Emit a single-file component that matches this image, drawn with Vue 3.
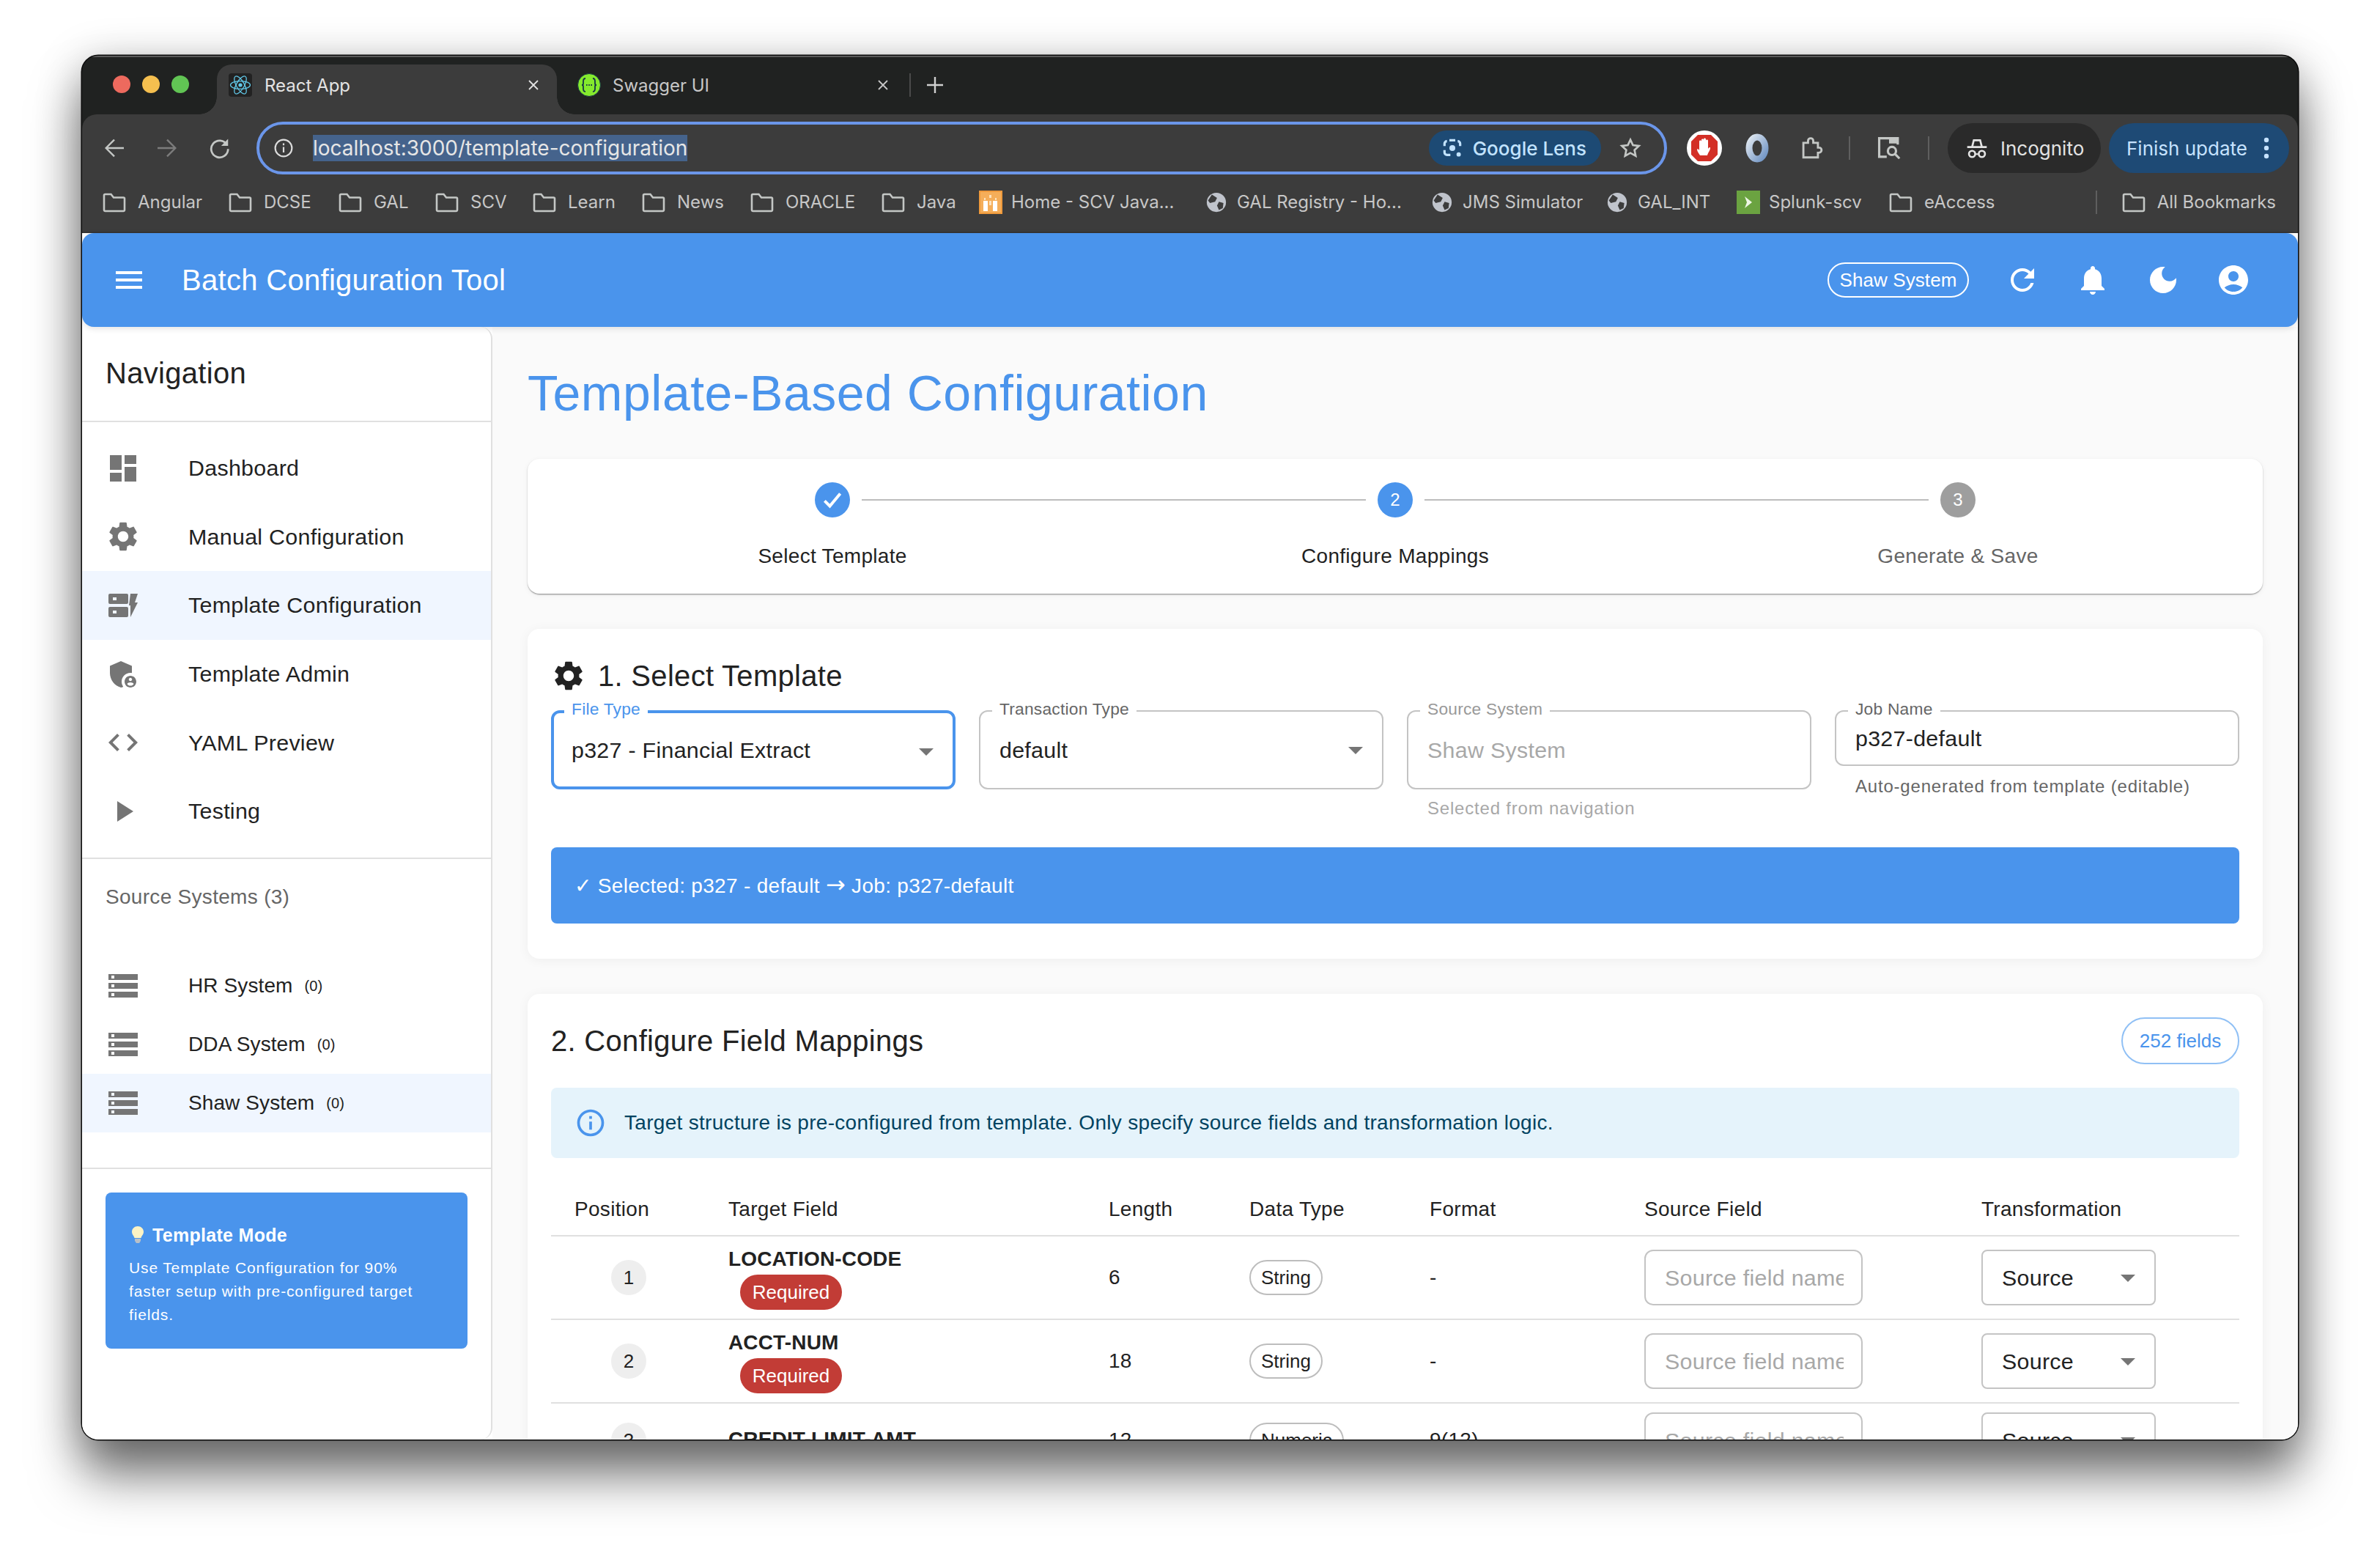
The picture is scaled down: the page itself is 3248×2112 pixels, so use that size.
<template>
  <div class="stage">
    <div class="window">
      <!-- tab strip -->
      <div class="tabstrip">
        <div class="lights">
          <span class="light red"></span>
          <span class="light yellow"></span>
          <span class="light green"></span>
        </div>
        <div class="tab active">
          <span class="favicon react">
            <svg viewBox="0 0 32 32" width="32" height="32" fill="none" stroke="#61c8e8" stroke-width="1.3">
              <ellipse cx="16" cy="16" rx="13.5" ry="5.4" />
              <ellipse cx="16" cy="16" rx="13.5" ry="5.4" transform="rotate(60 16 16)" />
              <ellipse cx="16" cy="16" rx="13.5" ry="5.4" transform="rotate(120 16 16)" />
              <circle cx="16" cy="16" r="2.6" fill="#61c8e8" stroke="none" />
            </svg>
          </span>
          <span class="tab-title">React App</span>
          <svg class="tab-x" viewBox="0 0 16 16" width="16" height="16" stroke="#e3e3e3" stroke-width="1.8"><path d="M2 2l12 12M14 2L2 14" /></svg>
        </div>
        <div class="tab">
          <svg class="swagger" viewBox="0 0 32 32" width="32" height="32">
            <circle cx="16" cy="16" r="15.5" fill="#85ea2d" />
            <circle cx="16" cy="16" r="15.5" fill="none" stroke="#173647" stroke-width="1" />
            <path d="M11 7c-3 0-3 2-3 4v3c0 1-1 2-2 2 1 0 2 1 2 2v3c0 2 0 4 3 4M21 7c3 0 3 2 3 4v3c0 1 1 2 2 2-1 0-2 1-2 2v3c0 2 0 4-3 4" fill="none" stroke="#173647" stroke-width="1.8" />
            <path d="M12 16h1.6M15.2 16h1.6M18.4 16H20" stroke="#173647" stroke-width="2" />
          </svg>
          <span class="tab-title dim">Swagger UI</span>
          <svg class="tab-x" viewBox="0 0 16 16" width="16" height="16" stroke="#c7c7c7" stroke-width="1.8"><path d="M2 2l12 12M14 2L2 14" /></svg>
        </div>
        <span class="tab-sep"></span>
        <svg class="tab-plus" viewBox="0 0 24 24" width="24" height="24" stroke="#d0d0d0" stroke-width="2.4"><path d="M12 1v22M1 12h22" /></svg>
      </div>

      <!-- browser toolbar -->
      <div class="toolbar">
        <div class="navrow">
          <button class="navbtn">
            <svg viewBox="0 0 24 24" width="26" height="26" fill="none" stroke="#c4c7c5" stroke-width="2.2"><path d="M24 12H2M12 1.5L1.5 12 12 22.5" /></svg>
          </button>
          <button class="navbtn">
            <svg viewBox="0 0 24 24" width="26" height="26" fill="none" stroke="#7c7c7c" stroke-width="2.2"><path d="M0 12h22M12 1.5L22.500 12 12 22.500" /></svg>
          </button>
          <button class="navbtn">
            <svg viewBox="0 0 24 24" width="30" height="30" fill="none" stroke="#c4c7c5" stroke-width="2.2"><path d="M19.800 8.500A9.200 9.200 0 1 0 21 13" /><path d="M21 2v7.500h-7.500" fill="#c4c7c5" stroke="none" /></svg>
          </button>
          <div class="omnibox">
            <svg class="info-i" viewBox="0 0 24 24" width="26" height="26" fill="none" stroke="#dcdcdc" stroke-width="2"><circle cx="12" cy="12" r="10.500" /><path d="M12 10.500v7M12 6v2.500" /></svg>
            <span class="url">localhost:3000/template-configuration</span>
            <span class="spacer"></span>
            <span class="lens">
              <svg viewBox="0 0 24 24" width="32" height="32" fill="none" stroke="#c2e3ff" stroke-width="2.400">
                <path d="M9 4h6M4 10V7.500A2.500 2.500 0 0 1 6.500 5M20 10V7.500A2.500 2.500 0 0 0 17.500 5M4 14v2.500A2.500 2.500 0 0 0 6.500 19H10" />
                <circle cx="12" cy="12" r="3" fill="#c2e3ff" stroke="none" />
                <circle cx="18.500" cy="18.500" r="2.200" fill="#c2e3ff" stroke="none" />
              </svg>
              Google Lens
            </span>
            <svg class="star" viewBox="0 0 24 24" width="32" height="32" fill="none" stroke="#c4c7c5" stroke-width="2"><path d="M12 3.500l2.600 5.600 6.100.7-4.500 4.200 1.200 6L12 17l-5.400 3 1.200-6-4.500-4.200 6.100-.7z" /></svg>
          </div>
          <span class="ext adblock">
            <svg viewBox="0 0 48 48" width="48" height="48">
              <circle cx="24" cy="24" r="24" fill="#fff" />
              <path d="M15 6h18l9 9v18l-9 9H15l-9-9V15z" fill="#d32f26" />
              <path d="M18 34c-2-3-4-6-4-8 0-1 2-1 3 1V15c0-2 3-2 3 0v-2c0-2 3-2 3 0v-1c0-2 3-2 3 0v2c0-2 3-2 3 0v11c1-2 3-3 3-1 0 3-3 6-4 10z" fill="#fff" />
            </svg>
          </span>
          <span class="ext ring">
            <svg viewBox="0 0 40 48" width="40" height="48">
              <defs>
                <linearGradient id="ringGrad" x1="0" y1="0" x2="1" y2="1">
                  <stop offset="0" stop-color="#dfe7f0" />
                  <stop offset="1" stop-color="#6f93c4" />
                </linearGradient>
              </defs>
              <ellipse cx="20" cy="24" rx="11" ry="15" fill="none" stroke="url(#ringGrad)" stroke-width="9" />
            </svg>
          </span>
          <span class="ext puzzle">
            <svg viewBox="0 0 24 24" width="34" height="34" fill="none" stroke="#c4c7c5" stroke-width="2"><path d="M5 7h4.500V5a2.500 2.500 0 0 1 5 0v2H19v4.500h1a2.500 2.500 0 0 1 0 5h-1V21H5z" /></svg>
          </span>
          <span class="vsep first"></span>
          <span class="ext tabsearch">
            <svg viewBox="0 0 24 24" width="38" height="38" fill="none" stroke="#c4c7c5" stroke-width="2"><path d="M10 19.500H3.500v-16h16V9" /><path d="M12 3.500h7.500V8H12z" fill="#c4c7c5" stroke="none" /><circle cx="14.500" cy="14.500" r="3.500" /><path d="M17 17l4 4" /></svg>
          </span>
          <span class="vsep second"></span>
          <div class="pill incognito">
            <svg viewBox="0 0 24 24" width="32" height="32" fill="#e3e3e3"><path d="M8 3h8l1.800 7H22v2H2v-2h4.200zM9.500 5L8.300 10h7.400l-1.200-5z" /><circle cx="7" cy="18" r="3.200" fill="none" stroke="#e3e3e3" stroke-width="2" /><circle cx="17" cy="18" r="3.200" fill="none" stroke="#e3e3e3" stroke-width="2" /><path d="M10 17.500h4v1.500h-4z" /></svg>
            <span>Incognito</span>
          </div>
          <div class="pill finish">
            <span>Finish update</span>
            <svg viewBox="0 0 8 32" width="8" height="32" fill="#c6e2ff"><circle cx="4" cy="5" r="3.200" /><circle cx="4" cy="16" r="3.200" /><circle cx="4" cy="27" r="3.200" /></svg>
          </div>
        </div>

        <div class="bookmarks">
          <div
            v-for="b in bookmarks"
            :key="b.name"
            class="bookmark"
            :class="[b.icon, { end: b.end }]"
            :style="b.w ? { width: b.w + 'px' } : null"
          >
            <svg v-if="b.icon === 'folder'" viewBox="0 0 32 32" width="32" height="32" fill="none" stroke="#c4c7c5" stroke-width="2.600"><path d="M2 6.500A1.500 1.500 0 0 1 3.500 5h8L15 9.500h13.500A1.500 1.500 0 0 1 30 11v15.500a1.500 1.500 0 0 1-1.500 1.500h-25A1.500 1.500 0 0 1 2 26.500z" /></svg>
            <svg v-else-if="b.icon === 'globe'" viewBox="0 0 32 32" width="28" height="28">
              <circle cx="16" cy="16" r="15" fill="#c0c4cc" />
              <path d="M9 4l8 5-3 6-8 2-3-4zM20 15l7 2-1 8-6 3-3-7z" fill="#3c3c3c" />
            </svg>
            <svg v-else-if="b.icon === 'home'" viewBox="0 0 32 32" width="32" height="32">
              <rect width="32" height="32" fill="#ef9a3c" />
              <rect x="2" y="2" width="28" height="28" fill="#f5ae5a" />
              <path d="M6 14h6v14H6zM19 14h6v14h-6z" fill="#fff" />
              <path d="M14 6h3v4h-3zM7 10h2v3H7zM22 10h2v3h-2zM14 14h3v6h-3z" fill="#fde2bd" />
            </svg>
            <svg v-else viewBox="0 0 32 32" width="32" height="32">
              <rect width="32" height="32" fill="#6ba341" />
              <path d="M11 8l10 8-10 8 3-8z" fill="#eef6e6" />
            </svg>
            <span>{{ b.name }}</span>
          </div>
        </div>
      </div>

      <!-- page -->
      <div class="page">
        <header class="appbar">
          <svg class="hamburger" viewBox="0 0 24 24" width="48" height="48" fill="#fff"><path d="M3 18h18v-2H3v2zm0-5h18v-2H3v2zm0-7v2h18V6H3z" /></svg>
          <h1 class="app-title">Batch Configuration Tool</h1>
          <span class="spacer"></span>
          <span class="system-chip">Shaw System</span>
          <svg class="bar-icon first-icon" viewBox="0 0 24 24" width="48" height="48" fill="#fff"><path d="M17.650 6.350C16.200 4.900 14.210 4 12 4c-4.420 0-7.990 3.580-7.990 8s3.570 8 7.990 8c3.730 0 6.840-2.550 7.730-6h-2.080c-.82 2.330-3.040 4-5.650 4-3.310 0-6-2.690-6-6s2.690-6 6-6c1.660 0 3.140.69 4.220 1.780L13 11h7V4l-2.350 2.350z" /></svg>
          <svg class="bar-icon" viewBox="0 0 24 24" width="48" height="48" fill="#fff"><path d="M12 22c1.100 0 2-.9 2-2h-4c0 1.100.89 2 2 2zm6-6v-5c0-3.070-1.640-5.640-4.500-6.320V4c0-.83-.67-1.500-1.500-1.500s-1.500.67-1.500 1.500v.68C7.630 5.360 6 7.920 6 11v5l-2 2v1h16v-1l-2-2z" /></svg>
          <svg class="bar-icon" viewBox="0 0 24 24" width="48" height="48" fill="#fff"><path d="M12 3c-4.970 0-9 4.030-9 9s4.030 9 9 9 9-4.030 9-9c0-.46-.04-.92-.1-1.360-.98 1.370-2.580 2.260-4.400 2.260-2.980 0-5.400-2.420-5.400-5.400 0-1.810.89-3.420 2.260-4.400-.44-.06-.9-.1-1.360-.1z" /></svg>
          <svg class="bar-icon" viewBox="0 0 24 24" width="48" height="48" fill="#fff"><path d="M12 2C6.480 2 2 6.480 2 12s4.480 10 10 10 10-4.480 10-10S17.520 2 12 2zm0 4c1.930 0 3.500 1.570 3.500 3.500S13.930 13 12 13s-3.500-1.570-3.500-3.500S10.070 6 12 6zm0 14c-2.030 0-4.430-.82-6.140-2.880C7.550 15.800 9.680 15 12 15s4.450.8 6.140 2.120C16.430 19.180 14.030 20 12 20z" /></svg>
        </header>

        <div class="body">
          <aside class="sidebar">
            <div class="side-head">Navigation</div>
            <ul class="nav">
              <li v-for="item in navItems" :key="item.label" class="nav-item" :class="{ selected: item.selected }">
                <svg viewBox="0 0 24 24" width="48" height="48" fill="#757575"><path v-for="d in item.paths" :key="d" :d="d" /></svg>
                <span>{{ item.label }}</span>
              </li>
            </ul>
            <div class="side-sub">Source Systems (3)</div>
            <ul class="systems">
              <li v-for="s in systems" :key="s.label" class="system-item" :class="{ selected: s.selected }">
                <svg viewBox="0 0 24 24" width="48" height="48" fill="#757575"><path d="M2 20h20v-4H2v4zm2-3h2v2H4v-2zM2 4v4h20V4H2zm4 3H4V5h2v2zm-4 7h20v-4H2v4zm2-3h2v2H4v-2z" /></svg>
                <span>{{ s.label }}</span>
                <small>(0)</small>
              </li>
            </ul>
            <div class="side-foot">
              <div class="mode-card">
                <div class="mode-title">
                  <svg viewBox="0 0 16 24" width="16" height="24">
                    <path d="M8 0c4.400 0 8 3.300 8 7.500 0 3.600-2.600 5.300-3.500 8.500h-9C2.600 12.800 0 11.100 0 7.500 0 3.300 3.600 0 8 0z" fill="#fdf3c4" />
                    <path d="M4 17h8v3l-2 3H6l-2-3z" fill="#b9c0c8" />
                  </svg>
                  Template Mode
                </div>
                <p>Use Template Configuration for 90% faster setup with pre-configured target fields.</p>
              </div>
            </div>
          </aside>

          <main class="main">
            <h2 class="page-title">Template-Based Configuration</h2>

            <section class="card stepper">
              <div v-for="(step, i) in steps" :key="step.label" class="step" :class="step.state">
                <span v-if="i > 0" class="connector"></span>
                <span class="step-dot">
                  <svg v-if="step.state === 'done'" viewBox="0 0 24 24" width="34" height="34" fill="none" stroke="#fff" stroke-width="2.800"><path d="M4.500 13l5 5 10-12" /></svg>
                  <template v-else>{{ i + 1 }}</template>
                </span>
                <span class="step-label">{{ step.label }}</span>
              </div>
            </section>

            <section class="card select-card">
              <h3 class="card-title">
                <svg viewBox="0 0 24 24" width="48" height="48" fill="#222"><path :d="gearPath" /></svg>
                1. Select Template
              </h3>
              <div class="field-grid">
                <div class="field">
                  <div class="outline focused">
                    <span class="float-label">File Type</span>
                    <span class="value">p327 - Financial Extract</span>
                    <svg class="caret" viewBox="0 0 24 24" width="48" height="48" fill="#757575"><path d="M7 10l5 5 5-5z" /></svg>
                  </div>
                </div>
                <div class="field">
                  <div class="outline">
                    <span class="float-label">Transaction Type</span>
                    <span class="value">default</span>
                    <svg class="caret" viewBox="0 0 24 24" width="48" height="48" fill="#757575"><path d="M7 10l5 5 5-5z" /></svg>
                  </div>
                </div>
                <div class="field">
                  <div class="outline disabled">
                    <span class="float-label">Source System</span>
                    <span class="value">Shaw System</span>
                  </div>
                  <p class="helper muted">Selected from navigation</p>
                </div>
                <div class="field">
                  <div class="outline short">
                    <span class="float-label">Job Name</span>
                    <span class="value">p327-default</span>
                  </div>
                  <p class="helper job">Auto-generated from template (editable)</p>
                </div>
              </div>
              <div class="selected-bar"><span>✓ Selected: p327 - default <span class="arrow">→</span> Job: p327-default</span></div>
            </section>

            <section class="card mapping-card">
              <div class="mapping-head">
                <h3 class="card-title plain">2. Configure Field Mappings</h3>
                <span class="count-chip">252 fields</span>
              </div>
              <div class="alert">
                <svg viewBox="0 0 24 24" width="44" height="44" fill="#4a94ec"><path d="M11 7h2v2h-2zm0 4h2v6h-2zm1-9C6.480 2 2 6.480 2 12s4.480 10 10 10 10-4.480 10-10S17.520 2 12 2zm0 18c-4.410 0-8-3.590-8-8s3.590-8 8-8 8 3.590 8 8-3.590 8-8 8z" /></svg>
                <span>Target structure is pre-configured from template. Only specify source fields and transformation logic.</span>
              </div>
              <table class="mapping">
                <colgroup>
                  <col style="width: 210px" />
                  <col style="width: 519px" />
                  <col style="width: 192px" />
                  <col style="width: 246px" />
                  <col style="width: 293px" />
                  <col style="width: 460px" />
                  <col style="width: 384px" />
                </colgroup>
                <thead>
                  <tr>
                    <th>Position</th>
                    <th>Target Field</th>
                    <th>Length</th>
                    <th>Data Type</th>
                    <th>Format</th>
                    <th>Source Field</th>
                    <th>Transformation</th>
                  </tr>
                </thead>
                <tbody>
                  <tr v-for="row in rows" :key="row.pos">
                    <td><span class="pos">{{ row.pos }}</span></td>
                    <td>
                      <div class="field-name">{{ row.name }}</div>
                      <span v-if="row.required" class="required">Required</span>
                    </td>
                    <td>{{ row.length }}</td>
                    <td><span class="type-chip">{{ row.type }}</span></td>
                    <td>{{ row.format }}</td>
                    <td><div class="src-input"><span>Source field name</span></div></td>
                    <td>
                      <div class="transform">
                        <span>Source</span>
                        <svg viewBox="0 0 24 24" width="48" height="48" fill="#757575"><path d="M7 10l5 5 5-5z" /></svg>
                      </div>
                    </td>
                  </tr>
                </tbody>
              </table>
            </section>
          </main>
        </div>
      </div>
    </div>
  </div>
</template>

<script setup>
const gearPath =
  'M19.140 12.940c.04-.3.06-.61.06-.94 0-.32-.02-.64-.07-.94l2.030-1.580c.18-.14.23-.41.12-.61l-1.920-3.320c-.12-.22-.37-.29-.59-.22l-2.390.96c-.5-.38-1.030-.7-1.620-.94l-.36-2.540c-.04-.24-.24-.41-.48-.41h-3.840c-.24 0-.43.17-.47.41l-.36 2.540c-.59.24-1.130.57-1.620.94l-2.390-.96c-.22-.08-.47 0-.59.22L2.740 8.870c-.12.21-.08.47.12.61l2.030 1.580c-.05.3-.09.63-.09.94s.02.64.07.94l-2.030 1.580c-.18.14-.23.41-.12.61l1.920 3.320c.12.22.37.29.59.22l2.390-.96c.5.38 1.030.7 1.620.94l.36 2.540c.05.24.24.41.48.41h3.840c.24 0 .44-.17.47-.41l.36-2.540c.59-.24 1.130-.56 1.620-.94l2.390.96c.22.08.47 0 .59-.22l1.920-3.320c.12-.22.07-.47-.12-.61l-2.010-1.580zM12 15.600c-1.980 0-3.600-1.620-3.600-3.600s1.620-3.600 3.600-3.600 3.600 1.620 3.600 3.600-1.620 3.600-3.600 3.600z'

// w is the slot each bookmark takes in the row
const bookmarks = [
  { name: 'Angular', icon: 'folder', w: 172 },
  { name: 'DCSE', icon: 'folder', w: 150 },
  { name: 'GAL', icon: 'folder', w: 132 },
  { name: 'SCV', icon: 'folder', w: 133 },
  { name: 'Learn', icon: 'folder', w: 149 },
  { name: 'News', icon: 'folder', w: 148 },
  { name: 'ORACLE', icon: 'folder', w: 179 },
  { name: 'Java', icon: 'folder', w: 133 },
  { name: 'Home - SCV Java...', icon: 'home', w: 310 },
  { name: 'GAL Registry - Ho...', icon: 'globe', w: 308 },
  { name: 'JMS Simulator', icon: 'globe', w: 239 },
  { name: 'GAL_INT', icon: 'globe', w: 177 },
  { name: 'Splunk-scv', icon: 'splunk', w: 208 },
  { name: 'eAccess', icon: 'folder', w: 160 },
  { name: 'All Bookmarks', icon: 'folder', end: true },
]

const navItems = [
  { label: 'Dashboard', paths: ['M3 13h8V3H3v10zm0 8h8v-6H3v6zm10 0h8V11h-8v10zm0-18v6h8V3h-8z'] },
  { label: 'Manual Configuration', paths: [gearPath] },
  {
    label: 'Template Configuration',
    selected: true,
    paths: [
      'M3 4h11.500a1 1 0 0 1 1 1v5a1 1 0 0 1-1 1H3a1 1 0 0 1-1-1V5a1 1 0 0 1 1-1zm2 2.500v2h2.500v-2z',
      'M3 13h11.500a1 1 0 0 1 1 1v5a1 1 0 0 1-1 1H3a1 1 0 0 1-1-1v-5a1 1 0 0 1 1-1zm2 2.500v2h2.500v-2z',
      'M17 4h5l-2 6h2l-5 10v-8h-1z',
    ],
  },
  {
    label: 'Template Admin',
    paths: [
      'M17 11c.34 0 .67.04 1 .09V6.270L10.500 3 3 6.270v4.910c0 4.540 3.200 8.790 7.500 9.820.55-.13 1.080-.32 1.600-.55-.69-.98-1.100-2.170-1.100-3.450 0-3.310 2.690-6 6-6z',
      'M17 13c-2.210 0-4 1.790-4 4s1.790 4 4 4 4-1.790 4-4-1.790-4-4-4zm0 1.380c.62 0 1.120.51 1.120 1.120s-.51 1.120-1.120 1.120-1.120-.51-1.120-1.120.5-1.120 1.120-1.120zm0 5.370c-.93 0-1.740-.46-2.240-1.170.05-.72 1.510-1.080 2.240-1.080s2.190.36 2.240 1.080c-.5.71-1.310 1.170-2.240 1.170z',
    ],
  },
  { label: 'YAML Preview', paths: ['M9.400 16.600 4.800 12l4.600-4.600L8 6l-6 6 6 6 1.400-1.400zm5.200 0 4.600-4.600-4.600-4.600L16 6l6 6-6 6-1.400-1.400z'] },
  { label: 'Testing', paths: ['M8 5v14l11-7z'] },
]

const systems = [
  { label: 'HR System' },
  { label: 'DDA System' },
  { label: 'Shaw System', selected: true },
]

const steps = [
  { label: 'Select Template', state: 'done' },
  { label: 'Configure Mappings', state: 'current' },
  { label: 'Generate & Save', state: 'todo' },
]

const rows = [
  { pos: 1, name: 'LOCATION-CODE', length: 6, type: 'String', format: '-', required: true },
  { pos: 2, name: 'ACCT-NUM', length: 18, type: 'String', format: '-', required: true },
  { pos: 3, name: 'CREDIT-LIMIT-AMT', length: 12, type: 'Numeric', format: '9(12)', required: false },
]
</script>

<style>
html,
body {
  margin: 0;
  background: #fff;
  overflow: hidden;
}
</style>

<style scoped>
.stage {
  width: 3248px;
  height: 2112px;
  overflow: hidden;
  padding: 76px 0 0 112px;
  box-sizing: border-box;
  background: #fff;
  font-family: "Liberation Sans", Arial, sans-serif;
  color: #222;
}

.window {
  position: relative;
  width: 3024px;
  height: 1888px;
  border-radius: 22px;
  background: #202221;
  box-shadow: 0 0 0 1.5px #0a0a0a, 0 50px 68px rgba(0, 0, 0, 0.5), 0 10px 60px rgba(0, 0, 0, 0.28);
  display: flex;
  flex-direction: column;
  overflow: hidden;
}

.spacer {
  flex: 1;
}

/* browser chrome */
.tabstrip {
  height: 80px;
  flex: none;
  display: flex;
  align-items: flex-start;
  font-family: Inter, "Liberation Sans", sans-serif;
  border-top: 2px solid #5a5a5a;
  box-sizing: border-box;
}

.lights {
  width: 184px;
  height: 78px;
  display: flex;
  align-items: center;
  gap: 16px;
  padding: 0 0 4px 42px;
  box-sizing: border-box;
  flex: none;
}

.light {
  width: 24px;
  height: 24px;
  border-radius: 50%;
}

.red { background: #ed6a5e; }
.yellow { background: #f5bf4f; }
.green { background: #61c554; }

.tab {
  position: relative;
  width: 464px;
  height: 68px;
  margin-top: 10px;
  border-radius: 20px 20px 0 0;
  display: flex;
  align-items: center;
  padding: 0 24px 12px 16px;
  box-sizing: border-box;
  font-size: 24px;
  flex: none;
}

.tab.active {
  background: #3c3c3c;
}

.tab.active::before,
.tab.active::after {
  content: "";
  position: absolute;
  bottom: 0;
  width: 24px;
  height: 24px;
}

.tab.active::before {
  left: -24px;
  background: radial-gradient(circle at 0 0, transparent 23.5px, #3c3c3c 24px);
}

.tab.active::after {
  right: -24px;
  background: radial-gradient(circle at 100% 0, transparent 23.5px, #3c3c3c 24px);
}

.tab:not(.active) {
  padding-left: 28px;
  padding-right: 11px;
}

.favicon.react {
  width: 32px;
  height: 32px;
  background: #222;
  border-radius: 4px;
  flex: none;
}

.favicon svg,
.swagger {
  display: block;
  flex: none;
}

.tab-title {
  margin-left: 17px;
  color: #e3e3e3;
  flex: 1;
}

.tab-title.dim {
  margin-left: 16px;
  color: #c7c7c7;
}

.tab-x {
  flex: none;
}

.tab-sep {
  width: 2px;
  height: 32px;
  background: #4a4a4a;
  margin: 22px 0 0 17px;
  flex: none;
}

.tab-plus {
  margin: 26px 0 0 21px;
  flex: none;
}

.toolbar {
  height: 160px;
  flex: none;
  background: #3c3c3c;
  border-radius: 20px 20px 0 0;
  border-bottom: 2px solid #353535;
  box-sizing: content-box;
  font-family: Inter, "Liberation Sans", sans-serif;
  position: relative;
}

.navrow {
  height: 82px;
  padding: 10px 0 0 8px;
  box-sizing: border-box;
  display: flex;
  align-items: center;
}

.navbtn {
  width: 72px;
  height: 72px;
  background: none;
  border: 0;
  padding: 0;
  display: flex;
  align-items: center;
  justify-content: center;
  flex: none;
}

.omnibox {
  width: 1925px;
  height: 72px;
  margin-left: 14px;
  border: 4px solid #6b96ea;
  border-radius: 36px;
  box-sizing: border-box;
  display: flex;
  align-items: center;
  padding: 0 30px 0 20px;
  flex: none;
}

.info-i {
  flex: none;
}

.url {
  margin-left: 27px;
  background: #45638c;
  color: #e6e6e6;
  font-size: 28px;
  line-height: 36px;
  white-space: nowrap;
}

.lens {
  display: flex;
  align-items: center;
  gap: 12px;
  height: 48px;
  padding: 0 20px 0 16px;
  background: #1d4a74;
  color: #c2e3ff;
  font-size: 26px;
  font-weight: 500;
  border-radius: 24px;
  margin-right: 24px;
}

.star {
  flex: none;
}

.ext {
  display: flex;
  align-items: center;
  justify-content: center;
  flex: none;
}

.adblock { margin-left: 27px; width: 48px; }
.ring { margin-left: 28px; width: 40px; }
.puzzle { margin-left: 33px; width: 40px; }
.tabsearch { margin-left: 33px; width: 40px; }

.vsep {
  width: 2px;
  height: 32px;
  background: #5f5f5f;
  flex: none;
}

.vsep.first { margin-left: 32px; }
.vsep.second { margin-left: 33px; }

.pill {
  height: 68px;
  border-radius: 34px;
  display: flex;
  align-items: center;
  box-sizing: border-box;
  font-size: 26px;
  flex: none;
}

.incognito {
  margin-left: 25px;
  width: 209px;
  background: #2a2a2a;
  color: #e3e3e3;
  padding-left: 24px;
  gap: 16px;
}

.finish {
  margin-left: 11px;
  width: 246px;
  background: #1e4a75;
  color: #c6e2ff;
  padding-left: 24px;
  gap: 22px;
}

.bookmarks {
  height: 78px;
  padding: 0 0 3px 28px;
  box-sizing: border-box;
  display: flex;
  align-items: center;
  color: #c7c7c7;
  font-size: 24px;
  white-space: nowrap;
}

.bookmark {
  display: flex;
  align-items: center;
  gap: 16px;
  flex: none;
  box-sizing: border-box;
}

.bookmark.home,
.bookmark.splunk {
  gap: 12px;
}

.bookmark.globe {
  gap: 14px;
}

.bookmark svg {
  flex: none;
}

.bookmark.end {
  margin-left: auto;
  margin-right: 30px;
  padding-left: 34px;
  border-left: 2px solid #5f5f5f;
  height: 32px;
}

/* app */
.page {
  flex: 1;
  min-height: 0;
  background: #fff;
  display: flex;
  flex-direction: column;
}

.appbar {
  height: 128px;
  flex: none;
  background: #4a94ec;
  border-radius: 16px;
  display: flex;
  align-items: center;
  padding: 0 64px 0 40px;
  color: #fff;
  box-shadow: 0 2px 8px rgba(0, 0, 0, 0.12);
  position: relative;
  z-index: 2;
}

.app-title {
  margin: 0 0 0 48px;
  font-size: 40px;
  font-weight: 400;
  letter-spacing: 0.3px;
}

.system-chip {
  height: 48px;
  line-height: 44px;
  border: 2px solid #fff;
  border-radius: 24px;
  box-sizing: border-box;
  font-size: 26px;
  width: 193px;
  text-align: center;
  letter-spacing: 0.1px;
}

.bar-icon {
  margin-left: 48px;
  flex: none;
}

.first-icon {
  margin-left: 49px;
}

.body {
  flex: 1;
  min-height: 0;
  display: flex;
}

.sidebar {
  width: 560px;
  flex: none;
  box-sizing: border-box;
  background: #fff;
  border-right: 2px solid #e0e0e0;
  border-radius: 0 16px 16px 0;
}

.side-head {
  height: 130px;
  box-sizing: border-box;
  padding: 0 32px 2px;
  display: flex;
  align-items: center;
  font-size: 40px;
  letter-spacing: 0.3px;
  color: #222;
  border-bottom: 2px solid #e0e0e0;
}

.nav,
.systems {
  list-style: none;
  margin: 0;
  padding: 0;
}

.nav {
  padding: 16px 0 16px;
  border-bottom: 2px solid #e0e0e0;
}

.nav-item {
  height: 93.6px;
  display: flex;
  align-items: center;
  padding-left: 32px;
  font-size: 30.400px;
  letter-spacing: 0.285px;
  color: #222;
}

.nav-item svg,
.system-item svg {
  width: 48px;
  height: 48px;
  flex: none;
  margin-right: 65px;
}

.selected {
  background: #f0f6ff;
}

.side-sub {
  padding: 32px 32px 0;
  height: 133.5px;
  box-sizing: border-box;
  font-size: 28px;
  letter-spacing: 0.3px;
  line-height: 40px;
  color: #666;
}

.system-item {
  height: 80px;
  display: flex;
  align-items: center;
  padding-left: 32px;
  font-size: 28px;
  letter-spacing: 0.1px;
  color: #222;
}

.system-item small {
  margin-left: 16px;
  font-size: 20px;
}

.side-foot {
  margin-top: 48px;
  border-top: 2px solid #e0e0e0;
  padding: 32px 32px 0;
}

.mode-card {
  height: 213px;
  box-sizing: border-box;
  background: #4a94ec;
  border-radius: 8px;
  padding: 32px;
  color: #fff;
}

.mode-title {
  display: flex;
  align-items: center;
  gap: 12px;
  height: 52px;
  margin-left: 4px;
  font-size: 25px;
  letter-spacing: 0.3px;
  font-weight: 700;
}

.mode-card p {
  margin: 3px 0 0;
  max-width: 414px;
  font-size: 21px;
  letter-spacing: 0.86px;
  line-height: 32px;
}

.main {
  flex: 1;
  min-width: 0;
  background: #fafafa;
  padding: 48px;
  box-sizing: border-box;
}

.page-title {
  margin: 0 0 48px;
  font-size: 68px;
  line-height: 84px;
  font-weight: 400;
  letter-spacing: 0.5px;
  color: #4a94ec;
}

.card {
  background: #fff;
  border-radius: 16px;
  box-shadow: 0 2px 16px rgba(0, 0, 0, 0.05);
  margin-bottom: 48px;
}

.stepper {
  display: grid;
  grid-template-columns: repeat(3, 1fr);
  padding: 32px;
  box-shadow: 0 2px 2px -1px rgba(0, 0, 0, 0.3), 0 1px 2px rgba(0, 0, 0, 0.2), 0 2px 8px rgba(0, 0, 0, 0.05);
}

.step {
  position: relative;
  display: flex;
  flex-direction: column;
  align-items: center;
}

.connector {
  position: absolute;
  top: 23px;
  left: calc(-50% + 40px);
  right: calc(50% + 40px);
  height: 2px;
  background: #bdbdbd;
}

.step-dot {
  width: 48px;
  height: 48px;
  border-radius: 50%;
  background: #4a94ec;
  color: #fff;
  font-size: 24px;
  display: flex;
  align-items: center;
  justify-content: center;
}

.step.todo .step-dot {
  background: #9e9e9e;
}

.step-label {
  margin: 33px 0 -1px;
  font-size: 28px;
  letter-spacing: 0.3px;
  line-height: 40px;
}

.step.todo .step-label {
  color: #666;
}

.select-card {
  padding: 32px 32px 48px;
}

.card-title {
  margin: 0;
  font-size: 40px;
  letter-spacing: 0.3px;
  line-height: 64px;
  font-weight: 400;
  display: flex;
  align-items: center;
  gap: 16px;
  color: #222;
}

.card-title svg {
  flex: none;
}

.field-grid {
  display: grid;
  grid-template-columns: repeat(4, 1fr);
  gap: 32px;
  margin-top: 15px;
  align-items: start;
}

.outline {
  position: relative;
  height: 108px;
  border: 2px solid #c4c4c4;
  border-radius: 12px;
  box-sizing: border-box;
  display: flex;
  align-items: center;
  padding: 0 26px;
  font-size: 30.400px;
  letter-spacing: 0.285px;
}

.outline.short {
  height: 76px;
}

.outline.focused {
  border: 4px solid #4a94ec;
  padding: 0 24px;
}

.outline.disabled .value {
  color: #a8a8a8;
}

.float-label {
  position: absolute;
  left: 16px;
  top: -19px;
  padding: 0 10px;
  background: #fff;
  font-size: 22.800px;
  letter-spacing: 0.21px;
  line-height: 30px;
  color: #666;
}

.outline.focused .float-label {
  left: 14px;
  top: -21px;
  color: #4a94ec;
}

.outline.disabled .float-label {
  color: #999;
}

.caret {
  position: absolute;
  right: 12px;
  top: 28px;
}

.helper {
  margin: 6px 0 0;
  padding-left: 28px;
  font-size: 24px;
  letter-spacing: 0.8px;
  line-height: 40px;
}

.helper.muted {
  color: #a8a8a8;
}

.helper.job {
  margin-top: 8px;
  color: #666;
}

.selected-bar {
  height: 104px;
  margin-top: 33px;
  background: #4a94ec;
  border-radius: 8px;
  color: #fff;
  font-size: 28px;
  letter-spacing: 0.3px;
  display: flex;
  align-items: center;
  padding: 0 32px;
  font-family: "Liberation Sans", "DejaVu Sans", sans-serif;
}

.arrow {
  font-family: "DejaVu Sans", sans-serif;
  font-size: 32px;
  line-height: 1;
}

.mapping-card {
  padding: 32px;
  margin-bottom: 0;
}

.mapping-head {
  display: flex;
  align-items: center;
  justify-content: space-between;
  height: 64px;
}

.count-chip {
  width: 161px;
  height: 64px;
  line-height: 60px;
  text-align: center;
  box-sizing: border-box;
  border: 2px solid #90c0f5;
  border-radius: 32px;
  color: #4a94ec;
  font-size: 26px;
}

.alert {
  height: 96px;
  margin-top: 32px;
  background: #e5f3fb;
  border-radius: 8px;
  display: flex;
  align-items: center;
  gap: 24px;
  padding: 0 32px;
  color: #014361;
  font-size: 28px;
  letter-spacing: 0.3px;
}

.alert svg {
  flex: none;
}

.mapping {
  width: 2304px;
  margin-top: 32px;
  border-collapse: collapse;
  table-layout: fixed;
  font-size: 28px;
  letter-spacing: 0.3px;
}

.mapping th {
  height: 74px;
  padding: 2px 0 0 32px;
  text-align: left;
  font-weight: 400;
  border-bottom: 2px solid #e0e0e0;
  box-sizing: border-box;
  vertical-align: middle;
}

.mapping td {
  height: 102px;
  padding: 0 0 0 32px;
  border-bottom: 2px solid #e0e0e0;
  box-sizing: border-box;
  vertical-align: middle;
}

.mapping tr:has(.required) td {
  height: 114px;
}

.pos {
  width: 48px;
  height: 48px;
  margin-left: 50px;
  border-radius: 50%;
  background: #eee;
  display: flex;
  align-items: center;
  justify-content: center;
  font-size: 26px;
  letter-spacing: 0;
}

.field-name {
  font-weight: 700;
  line-height: 36px;
  margin-bottom: 3px;
  letter-spacing: 0.15px;
}

.required {
  display: block;
  margin-left: 16px;
  width: 139px;
  height: 48px;
  line-height: 48px;
  border-radius: 24px;
  background: #c23c36;
  color: #fff;
  text-align: center;
  font-size: 26px;
  letter-spacing: 0;
}

.type-chip {
  display: inline-block;
  height: 48px;
  line-height: 44px;
  padding: 0 14px;
  border: 2px solid #bdbdbd;
  border-radius: 24px;
  box-sizing: border-box;
  font-size: 26px;
  letter-spacing: 0;
  vertical-align: middle;
}

.src-input {
  width: 298px;
  height: 76px;
  border: 2px solid #c4c4c4;
  border-radius: 12px;
  box-sizing: border-box;
  padding: 0 24px 0 26px;
  display: flex;
  align-items: center;
  font-size: 30.400px;
  letter-spacing: 0.285px;
  color: #a8a8a8;
  white-space: nowrap;
}

.src-input span {
  display: block;
  overflow: hidden;
}

.transform {
  width: 238px;
  height: 76px;
  border: 2px solid #c4c4c4;
  border-radius: 8px;
  box-sizing: border-box;
  padding: 0 12px 0 26px;
  display: flex;
  align-items: center;
  justify-content: space-between;
  font-size: 30.400px;
  letter-spacing: 0.285px;
}
</style>
